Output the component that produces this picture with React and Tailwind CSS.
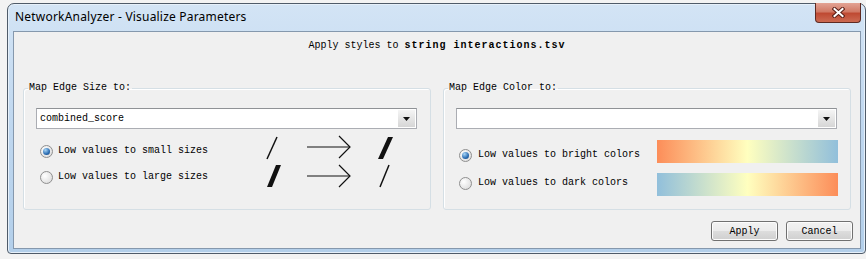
const mono = "font-['Liberation_Mono','DejaVu_Sans_Mono',monospace]";

function Radio({ checked }) {
  return (
    <span className="flex h-[13px] w-[13px] shrink-0 items-center justify-center rounded-full border border-[#8f8f8f] bg-[radial-gradient(circle_at_35%_35%,#ffffff,#d6d6d6)]">
      {checked && (
        <span className="h-[7px] w-[7px] rounded-full bg-[radial-gradient(circle_at_35%_30%,#a8d6f7,#2b6db3_60%,#163f70)]" />
      )}
    </span>
  );
}

function Combo({ value }) {
  return (
    <div className="flex h-[21px] items-stretch border border-[#abadb3] border-t-[#8f9296] bg-white">
      <div className={`flex flex-1 items-center pl-[3px] text-[10px] text-black ${mono}`}>{value}</div>
      <div className="m-[1px] flex w-[17px] items-center justify-center bg-gradient-to-b from-[#f5f5f5] to-[#d6d6d6]">
        <svg width="7" height="4" viewBox="0 0 7 4">
          <path d="M0 0h7L3.5 4z" fill="#111" />
        </svg>
      </div>
    </div>
  );
}

function Option({ checked, label, gap }) {
  return (
    <div className={`flex h-[14px] items-center ${gap}`}>
      <Radio checked={checked} />
      <span className={`text-[10px] leading-[14px] text-black ${mono}`}>{label}</span>
    </div>
  );
}

function Group({ title, children }) {
  return (
    <fieldset className="h-[128px] w-[408px] rounded-[3px] border border-[#d5dfe5] pl-[4px] pr-[13px] shadow-[inset_1px_1px_0_#ffffff]">
      <legend className={`px-[1px] text-[10px] leading-[12px] text-black ${mono}`}>{title}</legend>
      <div className="pl-[8px] pt-[14px]">{children}</div>
    </fieldset>
  );
}

function SizeArrows() {
  return (
    <svg width="133" height="56" viewBox="0 0 133 56" className="mt-[5px] shrink-0">
      <g stroke="#111" fill="none">
        <line x1="15" y1="3" x2="5" y2="25" strokeWidth="1.5" />
        <line x1="45" y1="13" x2="88" y2="13" strokeWidth="1.2" />
        <polyline points="77,2 88,13 77,24" strokeWidth="1.2" />
        <polygon points="126,3 131,3 121,25 116,25" fill="#111" stroke="none" />
        <polygon points="14,31 19,31 10,53 5,53" fill="#111" stroke="none" />
        <line x1="45" y1="42" x2="88" y2="42" strokeWidth="1.2" />
        <polyline points="77,31 88,42 77,53" strokeWidth="1.2" />
        <line x1="127" y1="31" x2="118" y2="53" strokeWidth="1.5" />
      </g>
    </svg>
  );
}

function Button({ children }) {
  return (
    <button
      className={`h-[20px] w-[67px] rounded-[3px] border border-[#707070] bg-[linear-gradient(to_bottom,#f2f2f2_0%,#ebebeb_50%,#dddddd_51%,#cfcfcf_100%)] text-[10px] text-black shadow-[inset_0_0_0_1px_#fcfcfc] ${mono}`}
    >
      {children}
    </button>
  );
}

export default function App() {
  return (
    <div className="flex h-[259px] w-[866px] overflow-hidden bg-[#f3f3f3] pl-[7px] pt-[3px]">
      <div className="flex h-[251px] w-[859px] flex-col rounded-t-[7px] rounded-b-[4px] border border-[#4f5b69] bg-gradient-to-b from-[#d3e4f5] via-[#bfd7ef] to-[#b3cfea] shadow-[inset_0_0_0_1px_#e6f0fa]">
        {/* title bar */}
        <div className="flex h-[27px] items-start justify-between">
          <span className="pl-[7px] pt-[5px] font-['Noto_Sans',sans-serif] text-[12px] leading-[16px] tracking-[0.2px] text-black">
            NetworkAnalyzer - Visualize Parameters
          </span>
          <div className="-mt-[1px] mr-[4px] flex h-[20px] w-[46px] items-center justify-center rounded-b-[4px] border border-t-0 border-[#5e2a22] bg-[linear-gradient(to_bottom,#e3a394_0%,#d17a66_45%,#bf4a33_55%,#cc6a52_100%)]">
            <svg width="13" height="11" viewBox="0 0 13 11">
              <g strokeLinecap="square">
                <path d="M2.5 2L10.5 9M10.5 2L2.5 9" stroke="#5a1f17" strokeWidth="4" />
                <path d="M2.5 2L10.5 9M10.5 2L2.5 9" stroke="#ffffff" strokeWidth="2" />
              </g>
            </svg>
          </div>
        </div>

        {/* body */}
        <div className="flex flex-1 pb-[4px] pl-[5px] pr-[4px]">
          <div className="flex flex-1 flex-col border border-[#8598ad] bg-[#f0f0f0]">
            <div className={`pt-[8px] text-center text-[10px] leading-[12px] text-black ${mono}`}>
              Apply styles to <span className="font-bold tracking-[1px]">string interactions.tsv</span>
            </div>

            <div className="mt-[30px] flex gap-[12px] pl-[9px]">
              <Group title="Map Edge Size to:">
                <Combo value="combined_score" />
                <div className="flex">
                  <div className="mt-[15px] flex w-[226px] flex-col gap-[12px] pl-[4px]">
                    <Option checked label="Low values to small sizes" gap="gap-[5px]" />
                    <Option label="Low values to large sizes" gap="gap-[5px]" />
                  </div>
                  <SizeArrows />
                </div>
              </Group>

              <Group title="Map Edge Color to:">
                <Combo value="" />
                <div className="flex">
                  <div className="mt-[19px] flex flex-col gap-[14px] pl-[3px]">
                    <Option checked label="Low values to bright colors" gap="gap-[6px]" />
                    <Option label="Low values to dark colors" gap="gap-[6px]" />
                  </div>
                  <div className="-mr-[1px] ml-auto mt-[11px] flex flex-col gap-[10px]">
                    <div className="h-[23px] w-[181px] bg-[linear-gradient(to_right,#fc8d59,#ffffbf,#91bfdb)]" />
                    <div className="h-[23px] w-[181px] bg-[linear-gradient(to_right,#91bfdb,#ffffbf,#fc8d59)]" />
                  </div>
                </div>
              </Group>
            </div>

            <div className="mt-[11px] flex justify-end gap-[8px] pr-[7px]">
              <Button>Apply</Button>
              <Button>Cancel</Button>
            </div>
          </div>
        </div>
      </div>
    </div>
  );
}
